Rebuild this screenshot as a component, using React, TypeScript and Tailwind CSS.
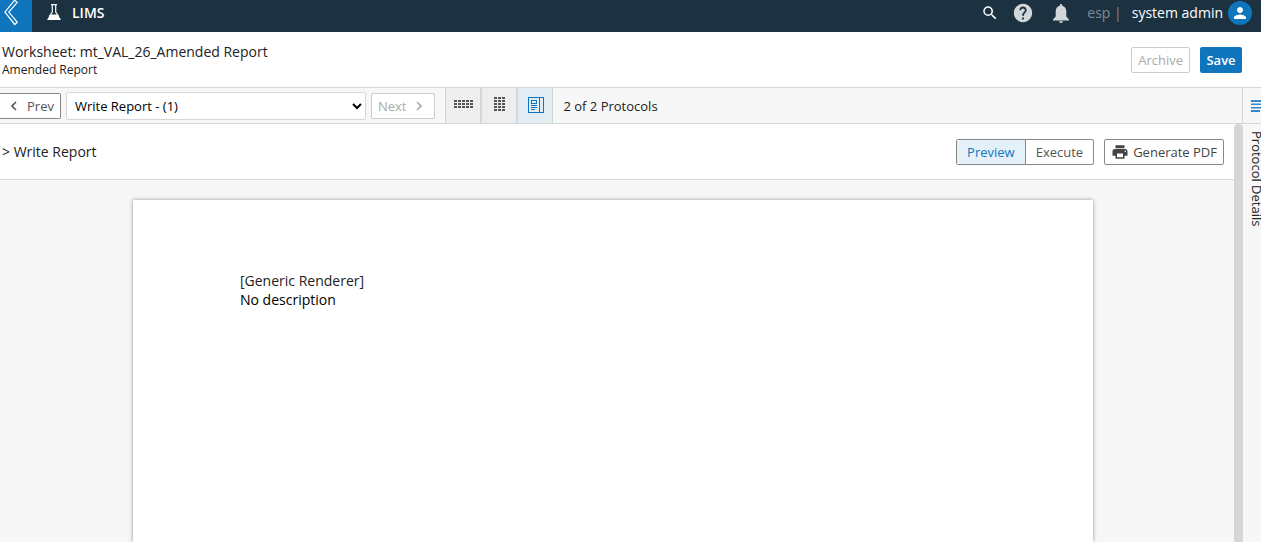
import type { ReactNode } from "react";

const protocols = ["Write Report - (1)"];

function BackIcon() {
  return (
    <svg width="14" height="26" viewBox="0 0 14 26" fill="none" stroke="currentColor" strokeWidth="1.2">
      <path d="M10.6.2 13.2 2.4 4.8 12.2l8.4 10-2.4 2.3L.9 12.2Z" strokeLinejoin="round" />
    </svg>
  );
}

function FlaskIcon() {
  return (
    <svg width="14" height="18" viewBox="0 0 14 18">
      <path d="M4 .6h6M5.3.6v7.4L2.2 12.500M8.700.6v7.400l3.100 4.500" fill="none" stroke="currentColor" strokeWidth="1.2" />
      <path d="M3.3 10.4h7.4L14 15.9H0Z" fill="currentColor" />
    </svg>
  );
}

function SearchIcon() {
  return (
    <svg width="18" height="18" viewBox="0 0 24 24" fill="currentColor">
      <path d="M15.5 14h-.79l-.28-.27A6.47 6.47 0 0 0 16 9.5 6.5 6.5 0 1 0 9.5 16c1.61 0 3.09-.59 4.23-1.57l.27.28v.79l5 4.99L20.49 19l-4.99-5zm-6 0C7.01 14 5 11.99 5 9.5S7.01 5 9.5 5 14 7.01 14 9.5 11.99 14 9.5 14z" />
    </svg>
  );
}

function HelpIcon() {
  return (
    <svg width="22" height="22" viewBox="0 0 24 24" fill="currentColor">
      <path d="M12 2C6.48 2 2 6.48 2 12s4.48 10 10 10 10-4.48 10-10S17.52 2 12 2zm1 17h-2v-2h2v2zm2.07-7.75-.9.92C13.45 12.9 13 13.5 13 15h-2v-.5c0-1.1.45-2.1 1.17-2.83l1.24-1.26c.37-.36.59-.86.59-1.41 0-1.1-.9-2-2-2s-2 .9-2 2H8c0-2.21 1.79-4 4-4s4 1.79 4 4c0 .88-.36 1.68-.93 2.25z" />
    </svg>
  );
}

function BellIcon() {
  return (
    <svg width="16" height="19" viewBox="0 0 16 19" fill="currentColor">
      <path d="M6.8 1.2a1.2 1.2 0 0 1 2.4 0v.6C11.8 2.4 13.3 4.6 13.3 7.3v5.2L16 15.4v1H0v-1l2.7-2.9V7.3c0-2.7 1.5-4.9 4.1-5.5ZM6 17.2h4a2 1.8 0 0 1-4 0Z" />
    </svg>
  );
}

function UserIcon() {
  return (
    <svg width="18" height="18" viewBox="0 0 24 24" fill="currentColor">
      <path d="M12 12c2.21 0 4-1.79 4-4s-1.79-4-4-4-4 1.79-4 4 1.79 4 4 4zm0 2c-2.67 0-8 1.34-8 4v2h16v-2c0-2.66-5.33-4-8-4z" />
    </svg>
  );
}

function PrintIcon() {
  return (
    <svg width="18" height="18" viewBox="0 0 24 24" fill="currentColor">
      <path d="M19 8H5c-1.66 0-3 1.34-3 3v6h4v4h12v-4h4v-6c0-1.66-1.34-3-3-3zm-3 11H8v-5h8v5zm3-7c-.55 0-1-.45-1-1s.45-1 1-1 1 .45 1 1-.45 1-1 1zm-1-9H6v4h12V3z" />
    </svg>
  );
}

function Chevron({ next = false }: { next?: boolean }) {
  return (
    <svg width="6" height="10" viewBox="0 0 6 10" fill="none" stroke="currentColor" strokeWidth="1.6">
      <path d={next ? "M1 1l4 4-4 4" : "M5 1 1 5l4 4"} />
    </svg>
  );
}

function DotGrid({ cols, rows }: { cols: number; rows: number }) {
  const cells = Array.from({ length: cols * rows }, (_, i) => i);
  const width = cols * 4 - 1;
  const height = rows * 3 - 1;

  return (
    <svg width={width} height={height} viewBox={`0 0 ${width} ${height}`} fill="currentColor">
      {cells.map((i) => (
        <rect key={i} x={(i % cols) * 4} y={Math.floor(i / cols) * 3} width="3" height="2" />
      ))}
    </svg>
  );
}

function ReportIcon() {
  return (
    <svg width="17" height="18" viewBox="-1 -2 17 18" fill="none" stroke="currentColor">
      <rect x=".5" y=".5" width="15" height="15" />
      <path d="M11.5.5v15M3 8.5h6M3 10.5h6M3 12.5h4" />
      <rect x="3.5" y="3.5" width="5" height="3" />
    </svg>
  );
}

function DetailsIcon() {
  return (
    <svg width="16" height="12" viewBox="0 0 16 12" fill="currentColor">
      <path d="M0 0h16v2H0zM0 3.5h16V5H0zM0 7h16v1.5H0zM0 10h9v2H0z" />
    </svg>
  );
}

interface ViewButtonProps {
  label: string;
  active?: boolean;
  children: ReactNode;
}

function ViewButton({ label, active = false, children }: ViewButtonProps) {
  return (
    <button
      aria-label={label}
      className={`flex w-9 items-center justify-center border-x border-[#d6d6d6] pb-[3px] pl-px ${
        active ? "bg-[#e1ecf3] text-[#0f75bd]" : "bg-[#eeeeee] text-[#555555]"
      }`}
    >
      {children}
    </button>
  );
}

export default function App() {
  return (
    <div className="flex h-screen flex-col overflow-hidden bg-white font-['Open_Sans',sans-serif] text-[13px] leading-5 text-[#222222]">
      <header className="flex h-8 shrink-0 items-center bg-[#1c3241] text-white">
        <button aria-label="Back" className="flex h-8 w-8 items-start bg-[#0f75bd] pl-1">
          <BackIcon />
        </button>
        <a href="#" className="flex items-center gap-[11px] pb-1.5 pl-[15px] text-sm font-semibold">
          <FlaskIcon />
          LIMS
        </a>
        <div className="ml-auto flex items-center pr-[9px] pb-1.5">
          <button aria-label="Search">
            <SearchIcon />
          </button>
          <button aria-label="Help" className="ml-[13px] text-[#d2d7da]">
            <HelpIcon />
          </button>
          <button aria-label="Notifications" className="ml-[19px] text-[#d2d7da]">
            <BellIcon />
          </button>
          <span className="ml-[18px] text-sm text-[#7f8c95]">esp |</span>
          <a href="#" className="ml-2.5 flex items-center gap-[5px] text-sm font-medium">
            system admin
            <span className="flex size-6 items-center justify-center rounded-full bg-[#0f75bd]">
              <UserIcon />
            </span>
          </a>
        </div>
      </header>

      <div className="flex h-14 shrink-0 items-center border-b border-[#d6d6d6] pr-[19px]">
        <div className="pl-0.5">
          <h1 className="text-sm leading-5">Worksheet: mt_VAL_26_Amended Report</h1>
          <p className="text-xs leading-4">Amended Report</p>
        </div>
        <div className="ml-auto flex gap-2.5">
          <button disabled className="h-[26px] rounded-xs border border-[#cccccc] px-1.5 pt-px text-[#aaaaaa]">
            Archive
          </button>
          <button className="h-[26px] w-[42px] rounded-xs bg-[#0f75bd] pt-px font-semibold text-white">Save</button>
        </div>
      </div>

      <div className="flex h-9 shrink-0 border-b border-[#d6d6d6] bg-[#f7f7f7]">
        <div className="flex items-center gap-[5px] pr-2.5">
          <button className="flex h-[26px] items-center gap-2.5 rounded-r-xs border border-l-0 border-[#888888] bg-white pt-px pr-1.5 pl-[11px] text-[#555555]">
            <Chevron />
            Prev
          </button>
          <select
            aria-label="Protocol"
            className="h-7 w-[300px] rounded-xs border border-[#d6d6d6] bg-white pl-1 text-[13px] text-black"
          >
            {protocols.map((name) => (
              <option key={name}>{name}</option>
            ))}
          </select>
          <button
            disabled
            className="flex h-[26px] items-center gap-2.5 rounded-xs border border-[#cccccc] bg-white pt-px pr-3 pl-1.5 text-[#aaaaaa]"
          >
            Next
            <Chevron next />
          </button>
        </div>
        <div className="flex">
          <ViewButton label="Row view">
            <DotGrid cols={5} rows={3} />
          </ViewButton>
          <ViewButton label="Column view">
            <DotGrid cols={3} rows={5} />
          </ViewButton>
          <ViewButton label="Report view" active>
            <ReportIcon />
          </ViewButton>
        </div>
        <span className="self-center pt-px pl-2.5">2 of 2 Protocols</span>
        <button
          aria-label="Toggle details"
          className="ml-auto flex w-[19px] items-center overflow-hidden border-l border-[#d6d6d6] pl-2 text-[#2f8acb]"
        >
          <span className="shrink-0">
            <DetailsIcon />
          </span>
        </button>
      </div>

      <div className="flex min-h-0 flex-1">
        <main className="flex min-w-0 flex-1 flex-col bg-[#f7f7f7]">
          <div className="flex h-14 shrink-0 items-center border-b border-[#d6d6d6] bg-white pr-2.5 pl-0.5">
            <h2 className="text-sm">&gt; Write Report</h2>
            <div className="ml-auto flex h-[26px] rounded-xs border border-[#888888] text-[#555555]">
              <button className="border-r border-[#888888] bg-[#e4f1f9] px-2.5 pt-px text-[#0f75bd]">Preview</button>
              <button className="px-2.5 pt-px">Execute</button>
            </div>
            <button className="ml-2.5 flex h-[26px] items-center gap-1 rounded-xs border border-[#888888] px-1.5 pt-px text-[#444444]">
              <PrintIcon />
              Generate PDF
            </button>
          </div>
          <div className="flex flex-1 justify-center pt-5 pr-2">
            <article className="w-[960px] bg-white px-[107px] pt-[71px] text-sm leading-[19px] shadow-[0_0_4px_rgba(0,0,0,0.4)]">
              <p>[Generic Renderer]</p>
              <p className="text-black">No description</p>
            </article>
          </div>
        </main>
        <div className="w-[9px] shrink-0 rounded-t-sm bg-[#d6d6d6]" />
        <aside className="w-[18px] shrink-0 overflow-hidden bg-[#f7f7f7] pt-[7px] pl-1">
          <span className="leading-5 whitespace-nowrap [writing-mode:vertical-rl]">Protocol Details</span>
        </aside>
      </div>
    </div>
  );
}
